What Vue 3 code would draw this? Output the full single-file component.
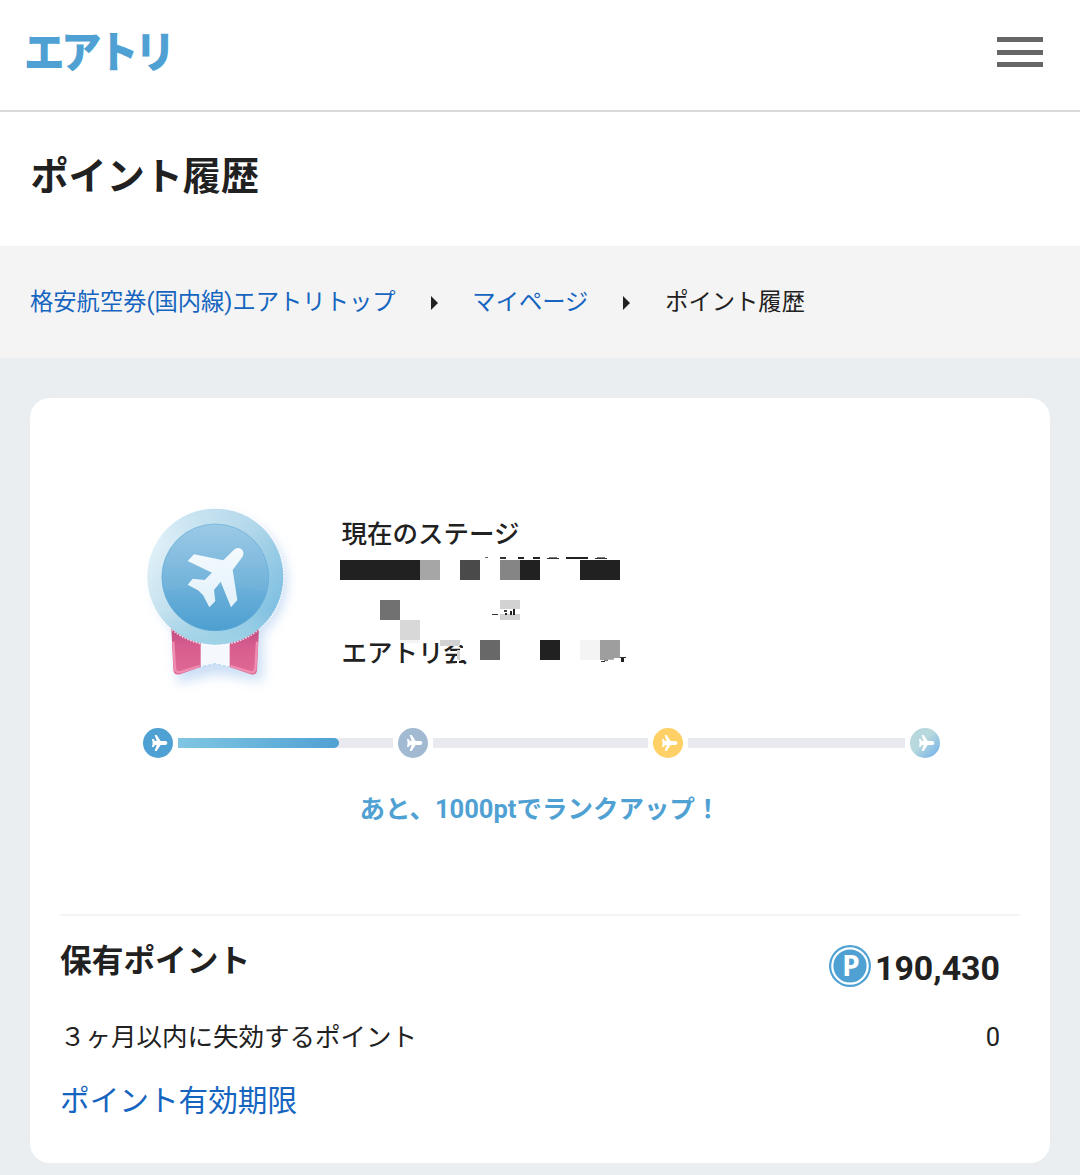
<template>
  <div class="page">
    <header class="header">
      <a class="logo" href="#" aria-label="エアトリ">
        <svg width="170" height="80" viewBox="0 0 170 80">
          <text class="logo-text" transform="translate(1 58) scale(0.88 0.95)">エアトリ</text>
        </svg>
      </a>
      <button class="menu-button" type="button" aria-label="メニュー">
        <span class="menu-line"></span>
        <span class="menu-line"></span>
        <span class="menu-line"></span>
      </button>
    </header>

    <h1 class="title">ポイント履歴</h1>

    <nav class="breadcrumb">
      <template v-for="(item, i) in breadcrumbs" :key="item.label">
        <svg v-if="i > 0" class="arrow" width="7" height="14" viewBox="0 0 7 14">
          <path d="M0 0 L7 7 L0 14 Z" />
        </svg>
        <a v-if="item.href" class="link" :href="item.href">{{ item.label }}</a>
        <span v-else>{{ item.label }}</span>
      </template>
    </nav>

    <main class="main">
      <section class="card">
        <div class="stage">
          <svg class="medal" width="200" height="220" viewBox="0 0 600 660">
            <defs>
              <linearGradient id="rim" x1="0" y1="0.15" x2="1" y2="0.8">
                <stop offset="0" stop-color="#e9f5fa" />
                <stop offset="0.5" stop-color="#b5d9ea" />
                <stop offset="1" stop-color="#77bce0" />
              </linearGradient>
              <linearGradient id="rim-glow" x1="0" y1="0" x2="0" y2="1">
                <stop offset="0" stop-color="#b5d9ee" stop-opacity="0.5" />
                <stop offset="0.25" stop-color="#b5d9ee" stop-opacity="0" />
                <stop offset="0.75" stop-color="#a9d8e8" stop-opacity="0" />
                <stop offset="1" stop-color="#9fd3e6" stop-opacity="0.9" />
              </linearGradient>
              <linearGradient id="face" x1="0" y1="0" x2="0" y2="1">
                <stop offset="0" stop-color="#9ccae6" />
                <stop offset="0.55" stop-color="#74b4db" />
                <stop offset="1" stop-color="#4d9fd2" />
              </linearGradient>
              <linearGradient id="ribbon" x1="0" y1="0" x2="0" y2="1">
                <stop offset="0" stop-color="#bd4c7e" />
                <stop offset="0.4" stop-color="#d85d8f" />
                <stop offset="1" stop-color="#df6995" />
              </linearGradient>
              <linearGradient id="plane" x1="0" y1="0" x2="0" y2="1">
                <stop offset="0" stop-color="#f4fafe" />
                <stop offset="1" stop-color="#e2f1fa" />
              </linearGradient>
              <filter id="shadow" x="-20%" y="-20%" width="140%" height="140%">
                <feGaussianBlur stdDeviation="17" />
              </filter>
            </defs>
            <g filter="url(#shadow)" fill="#a9c9ee" opacity="0.6">
              <circle cx="302" cy="276" r="199" />
              <path d="M164 420 H428 V574 L290 552 L174 580 Z" />
            </g>
            <path d="M235 430 H335 V533 L284 521 L235 533 Z" fill="#f5f9fd" />
            <path d="M235 533 L284 521 L335 533" class="hem" />
            <path d="M154 412 L242 440 V531 L180 553 Q161 557 160 539 Z" fill="url(#ribbon)" />
            <path d="M417 412 L329 440 V531 L392 553 Q410 557 411 539 Z" fill="url(#ribbon)" />
            <path d="M160 455 L165 537 Q167 549 181 546 L239 528 M411 455 L406 537 Q404 549 391 546 L332 528" class="ribbon-edge" />
            <circle cx="286" cy="260" r="204" fill="url(#rim)" />
            <circle cx="286" cy="260" r="204" fill="url(#rim-glow)" />
            <circle cx="286" cy="260" r="206" class="rim-edge" />
            <circle cx="286" cy="262" r="161" fill="url(#face)" />
            <path d="M132 306 Q286 270 440 306 A161 161 0 0 1 132 306 Z" fill="#4b9fd3" opacity="0.13" />
            <circle cx="286" cy="262" r="160" class="face-edge" />
            <path
              d="M222 193 L310 211 L341 180 Q352 170 364 177 Q375 187 367 201 L338 240 L352 330 L333 352 L302 275 L282 300 L286 333 L268 352 L249 315 L234 301 L203 284 L218 266 L254 270 L276 248 L203 213 Z"
              fill="url(#plane)"
            />
          </svg>

          <div class="stage-info">
            <p class="stage-line">現在のステージ</p>
            <p class="stage-line"></p>
            <p class="stage-line"></p>
            <p class="stage-line">エアトリ会</p>
            <svg class="mosaic" width="300" height="120" viewBox="340 550 300 120" shape-rendering="crispEdges">
              <rect
                v-for="(b, i) in blocks"
                :key="i"
                :x="b[0]"
                :y="b[1]"
                :width="b[2]"
                :height="b[3]"
                :fill="b[4]"
              />
            </svg>
          </div>
        </div>

        <div class="track">
          <template v-for="(rank, i) in ranks" :key="rank.name">
            <div v-if="i > 0" class="segment">
              <div class="segment-fill" :style="{ width: rank.progress + '%' }"></div>
            </div>
            <span class="rank" :class="'rank--' + rank.name">
              <svg width="30" height="30" viewBox="0 0 90 90">
                <path
                  d="M35 21 H41 L53 39 H68 Q73 40 73 45 Q73 50 68 51 H53 L41 69 H35 L41 51 H36 L32 57 H27 L29 45 L27 33 H32 L36 39 H41 Z"
                  fill="#fff"
                />
              </svg>
            </span>
          </template>
        </div>

        <p class="rank-message">あと、1000ptでランクアップ！</p>

        <div class="points">
          <div class="points-row points-row--total">
            <h2 class="points-heading">保有ポイント</h2>
            <div class="points-value">
              <svg width="42" height="42" viewBox="0 0 42 42">
                <circle cx="21" cy="21" r="21" fill="#50a1d3" />
                <circle cx="21" cy="21" r="17.7" fill="none" stroke="#fff" stroke-width="2.2" />
                <text class="coin-letter" x="22" y="31" text-anchor="middle">P</text>
              </svg>
              <span class="points-number">190,430</span>
            </div>
          </div>
          <div class="points-row points-row--expiring">
            <span>３ヶ月以内に失効するポイント</span>
            <span>0</span>
          </div>
          <a class="link points-link" href="#">ポイント有効期限</a>
        </div>
      </section>
    </main>
  </div>
</template>

<script setup>
const breadcrumbs = [
  { label: '格安航空券(国内線)エアトリトップ', href: '#' },
  { label: 'マイページ', href: '#' },
  { label: 'ポイント履歴' },
]

const ranks = [
  { name: 'blue' },
  { name: 'silver', progress: 75 },
  { name: 'gold', progress: 0 },
  { name: 'platinum', progress: 0 },
]

// x, y, width, height, color
const blocks = [
  // member name
  [340, 560, 80, 20, '#212121'],
  [420, 560, 20, 20, '#a6a6a6'],
  [460, 560, 20, 20, '#4a4a4a'],
  [500, 560, 20, 20, '#858585'],
  [520, 560, 20, 20, '#212121'],
  [580, 560, 40, 20, '#212121'],
  [485, 557, 3, 1, '#666'],
  [500, 557, 6, 2, '#333'],
  [518, 557, 6, 2, '#212121'],
  [533, 557, 7, 2, '#212121'],
  [547, 558, 12, 1, '#333'],
  [549, 557, 8, 1, '#777'],
  [566, 557, 22, 2, '#212121'],
  [595, 558, 12, 1, '#333'],
  [597, 557, 8, 1, '#777'],
  // second line
  [380, 600, 20, 20, '#717171'],
  [400, 620, 20, 20, '#d8d8d8'],
  [500, 600, 20, 9, '#d2d2d2'],
  [500, 614, 20, 6, '#d2d2d2'],
  [492, 614, 6, 1, '#333'],
  [504, 610, 3, 2, '#444'],
  [505, 613, 2, 2, '#212121'],
  [510, 611, 2, 4, '#212121'],
  [513, 609, 2, 6, '#212121'],
  // member type
  [400, 640, 20, 3, '#f4f4f4'],
  [440, 636, 30, 4, '#fff'],
  [440, 640, 20, 6, '#d2d2d2'],
  [460, 640, 10, 5, '#fff'],
  [463, 640, 7, 10, '#fff'],
  [457, 650, 3, 10, '#d2d2d2'],
  [457, 660, 2, 6, '#fff'],
  [460, 648, 10, 12, '#fff'],
  [480, 640, 20, 20, '#686868'],
  [540, 640, 20, 20, '#212121'],
  [580, 640, 20, 20, '#f4f4f4'],
  [600, 640, 20, 20, '#9e9e9e'],
  [608, 659, 7, 1, '#b5b5b5'],
  [601, 661, 4, 1, '#333'],
  [604, 660, 4, 1, '#777'],
  [614, 658, 6, 2, '#fff'],
  [620, 657, 6, 1, '#333'],
  [621, 658, 3, 4, '#212121'],
]
</script>

<style>
body {
  background: #eaeef1;
}
</style>

<style scoped>
.page {
  box-sizing: border-box;
  min-height: 1175px;
  font-family: Roboto, "Noto Sans CJK JP", sans-serif;
  color: #212121;
  background: #eaeef1;
}

.header {
  display: flex;
  align-items: flex-start;
  justify-content: space-between;
  box-sizing: border-box;
  height: 112px;
  padding: 10px 37px 0 23px;
  border-bottom: 2px solid #dadada;
  background: #fff;
}

.logo svg,
.medal {
  display: block;
}

.logo-text {
  font-family: "Noto Sans CJK JP", sans-serif;
  font-size: 46px;
  font-weight: 900;
  letter-spacing: -3.9px;
  fill: #50a1d3;
}

.menu-button {
  display: flex;
  flex-direction: column;
  gap: 7.5px;
  width: 46px;
  margin-top: 27px;
  padding: 0;
  border: 0;
  background: none;
}

.menu-line {
  width: 46px;
  height: 5px;
  background: #666;
}

.title {
  margin: 0;
  padding: 37px 30.5px 41px;
  background: #fff;
  font-size: 38.1px;
  font-weight: 700;
  line-height: 56px;
}

.breadcrumb {
  display: flex;
  align-items: center;
  box-sizing: border-box;
  height: 112px;
  padding: 0 30px 4px;
  background: #f4f4f4;
  font-size: 23.3px;
}

.arrow {
  margin: 6px 34.8px 0 35px;
  fill: #212121;
}

.link {
  color: #1565c0;
  text-decoration: none;
}

.main {
  padding: 40px 30px 12px;
}

.card {
  box-sizing: border-box;
  height: 765px;
  padding: 92px 30px 0;
  border-radius: 20px;
  background: #fff;
}

.stage {
  display: flex;
  padding-left: 60px;
}

.hem {
  fill: none;
  stroke: #b9d8ef;
  stroke-width: 4;
  stroke-dasharray: 9 6;
}

.ribbon-edge {
  fill: none;
  stroke: #ef8eb1;
  stroke-width: 7;
}

.rim-edge {
  fill: none;
  stroke: #fff;
  stroke-width: 4;
  stroke-dasharray: 5 4;
  opacity: 0.75;
}

.face-edge {
  fill: none;
  stroke: #5fa9d6;
  stroke-width: 3;
  opacity: 0.5;
}

.stage-info {
  position: relative;
  width: 320px;
  padding: 25px 0 0 21.5px;
  font-size: 25.5px;
  font-weight: 500;
}

.stage-line {
  height: 39.8px;
  margin: 0;
  line-height: 39.8px;
}

/* Covers the member details */
.mosaic {
  position: absolute;
  top: 60px;
  left: 20px;
}

.track {
  display: flex;
  align-items: center;
  width: 807px;
  margin: 13px 0 0 78px;
}

.segment {
  flex: none;
  width: 215px;
  height: 10px;
  background: #e9eaf0;
}

.segment:nth-last-child(2) {
  width: 217px;
}

.segment-fill {
  height: 10px;
  border-radius: 0 5px 5px 0;
  background: linear-gradient(90deg, #80c6e3, #50a1d3);
}

.rank {
  flex: none;
  width: 30px;
  height: 30px;
  margin: 5px;
  border-radius: 50%;
}

.rank svg {
  display: block;
}

.rank--blue {
  background: #50a1d3;
}

.rank--silver {
  background: #a1bad2;
}

.rank--gold {
  background: #ffd066;
}

.rank--platinum {
  background: linear-gradient(135deg, #b7d8dc 45%, #78b4e9 90%);
}

.rank-message {
  margin: 26px 0 0;
  color: #50a1d3;
  font-size: 25.5px;
  font-weight: 700;
  line-height: 40px;
  text-align: center;
}

.points {
  margin-top: 85px;
  border-top: 2px solid #f4f4f4;
}

.points-row {
  display: flex;
  justify-content: space-between;
  padding-right: 20px;
}

.points-row--total {
  align-items: flex-start;
  padding-top: 22px;
}

.points-heading {
  margin: 0;
  font-size: 31.7px;
  font-weight: 700;
  line-height: 48px;
}

.points-value {
  display: flex;
  align-items: flex-start;
  gap: 4px;
  margin-top: 7px;
  font-size: 33.9px;
  font-weight: 700;
  line-height: 42px;
}

.points-number {
  padding-top: 3px;
}

.coin-letter {
  font-family: "Noto Sans", sans-serif;
  font-size: 28px;
  font-weight: 700;
  fill: #fff;
}

.points-row--expiring {
  margin-top: 27px;
  font-size: 25.5px;
  line-height: 40px;
}

.points-link {
  display: block;
  width: max-content;
  margin-top: 21px;
  font-size: 29.65px;
  line-height: 46px;
}
</style>
